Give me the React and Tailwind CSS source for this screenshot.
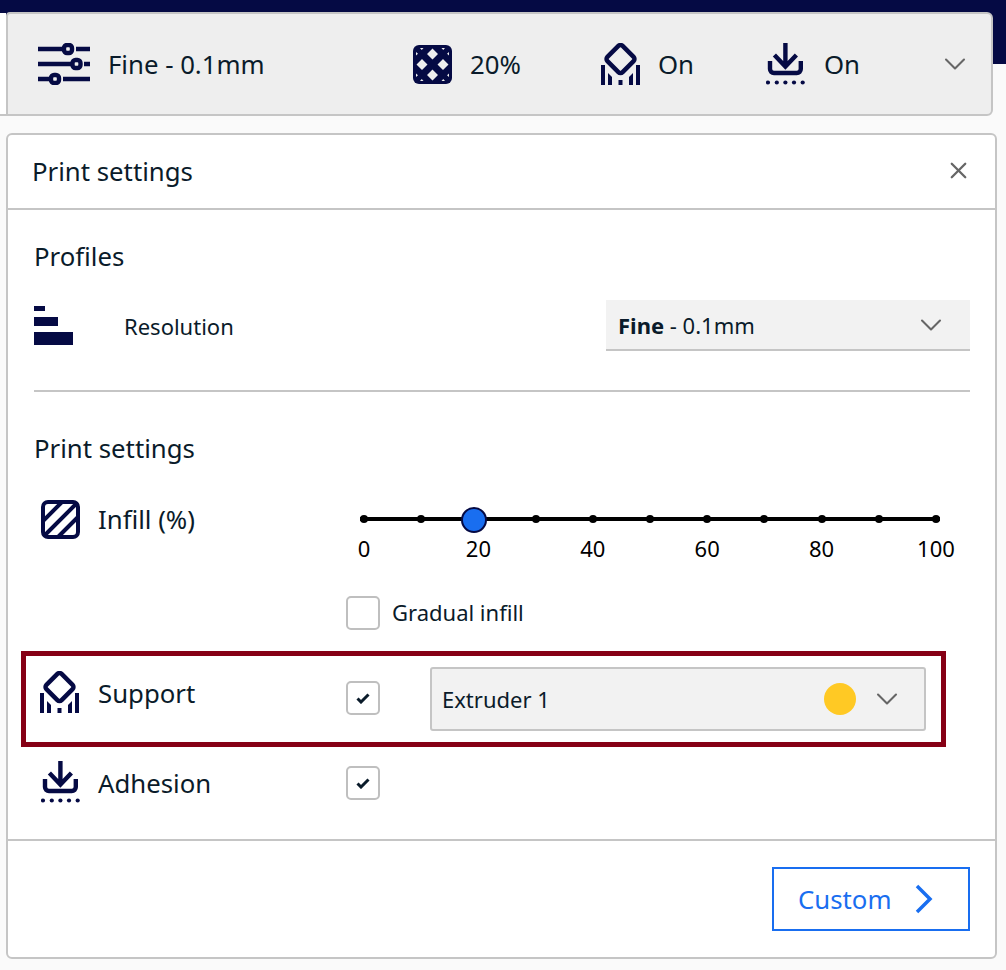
import React from 'react';
import { ChevronDown, X } from 'lucide-react';

const NAVY = '#050a44';

function ProfileIcon() {
  return (
    <svg width="52" height="42" viewBox="0 0 52 42" fill="none" stroke={NAVY} strokeWidth="4.400">
      <path d="M0 6h25M38 6h14M0 21h33M46 21h6M0 36h12M25 36h27" />
      <rect x="26" y="2" width="8" height="8" rx="3" />
      <rect x="34.500" y="17" width="8" height="8" rx="3" />
      <rect x="13" y="32" width="8" height="8" rx="3" />
    </svg>
  );
}

function InfillDenseIcon() {
  const corners = 'M7 3h3.500L8.750 5zM3 7v3.500L5 8.750zM32 3h-3.500L30.250 5zM36 7v3.500L34 8.750zM7 36h3.500L8.750 34zM3 32v-3.500L5 30.250zM32 36h-3.500L30.250 34zM36 32v-3.500L34 30.250z';
  return (
    <svg width="39" height="39" viewBox="0 0 39 39">
      <rect width="39" height="39" rx="6" fill={NAVY} />
      <path d="M19.500 3.500l5.500 5.500-5.500 5.500-5.500-5.500zM9 14l5.500 5.500L9 25l-5.500-5.500zM30 14l5.500 5.500L30 25l-5.500-5.500zM19.500 24.500l5.500 5.500-5.500 5.500-5.500-5.500z" fill="#eeeeee" />
      <path d={corners} fill="#eeeeee" />
    </svg>
  );
}

function InfillIcon() {
  return (
    <svg width="39" height="39" viewBox="0 0 39 39" fill="none" stroke={NAVY}>
      <path d="M1 22L22 1M4 35L35 4M17 37L37 17" strokeWidth="4" />
      <rect x="2" y="2" width="35" height="35" rx="5" strokeWidth="4" />
    </svg>
  );
}

function SupportIcon() {
  return (
    <svg width="40" height="42" viewBox="0 0 40 42" fill="none">
      <rect x="8.750" y="5.250" width="21.500" height="21.500" rx="3" transform="rotate(45 19.500 16)" stroke={NAVY} strokeWidth="4.500" />
      <path d="M0 22h4v20H0zM35 22h4v20h-4zM7 30l4 4v8H7zM32 30l-4 4v8h4zM17.500 37h4v5h-4z" fill={NAVY} />
    </svg>
  );
}

function AdhesionIcon() {
  return (
    <svg width="39" height="42" viewBox="0 0 39 42" fill="none">
      <path d="M19.400 0v22M8.400 12l11 11.500 11-11.500" stroke={NAVY} strokeWidth="4.400" />
      <path d="M4 18v8a4 4 0 0 0 4 4h22.800a4 4 0 0 0 4-4v-8" stroke={NAVY} strokeWidth="4.400" />
      {[2, 10.800, 19.400, 28, 36.700].map((x) => (
        <circle key={x} cx={x} cy="39.500" r="2.100" fill={NAVY} />
      ))}
    </svg>
  );
}

function ResolutionIcon() {
  return (
    <div className="flex flex-col items-start w-[40px]">
      <div className="w-[11px] h-[5px] bg-[#050a44]" />
      <div className="w-[24px] h-[9px] mt-[6px] bg-[#050a44]" />
      <div className="w-[39px] h-[13px] mt-[6px] bg-[#050a44]" />
    </div>
  );
}

function Check({ on }) {
  return (
    <div className="w-[34px] h-[34px] rounded-[5px] border-2 border-[#bfbfbf] bg-white flex items-center justify-center">
      {on && (
        <svg width="14" height="11" viewBox="0 0 14 11" fill="none">
          <path d="M1.500 5.500L5 9l7.500-7.500" stroke="#0a1b2a" strokeWidth="3" />
        </svg>
      )}
    </div>
  );
}

function Slider() {
  const ticks = [0, 10, 20, 30, 40, 50, 60, 70, 80, 90, 100];
  const labels = [0, 20, 40, 60, 80, 100];
  return (
    <div className="w-[612px]">
      <div className="relative mx-[16px] h-[38px] flex items-center">
        <div className="relative w-full h-[4px] bg-black flex items-center justify-between">
          {ticks.map((t) => (
            <div key={t} className="w-[8px] h-[8px] rounded-full bg-black" />
          ))}
        </div>
        <div className="absolute left-[101px] top-[7px] w-[26px] h-[26px] rounded-full bg-[#196ef0] border-2 border-[#050a44]" />
      </div>
      <div className="flex justify-between text-[22px] leading-[20px] text-black">
        {labels.map((l) => (
          <div key={l} className="w-[40px] text-center">{l}</div>
        ))}
      </div>
    </div>
  );
}

export default function App() {
  return (
    <div className="w-[1006px] h-[970px] bg-[#fafafa] overflow-hidden font-['Noto_Sans',sans-serif] text-[#0a1b2a]">
      <div className="h-[64px] bg-[#050a44]" />

      <div className="flex -mt-[52px]">
        <div className="w-[6px] h-[103px] mt-[1px] bg-white border-b-2 border-[#c5c5c5]" />
        <div className="w-[987px] h-[104px] flex items-center bg-[#eeeeee] border-2 border-[#c5c5c5] rounded-r-[6px] rounded-tl-[4px]">
          <div className="ml-[30px]"><ProfileIcon /></div>
          <span className="ml-[18px] w-[305px] text-[25.750px] leading-[32px]">Fine - 0.1mm</span>
          <InfillDenseIcon />
          <span className="ml-[18px] w-[131px] text-[25.750px] leading-[32px]">20%</span>
          <SupportIcon />
          <span className="ml-[17px] w-[108px] text-[25.750px] leading-[32px]">On</span>
          <AdhesionIcon />
          <span className="ml-[19px] w-[113px] text-[25.750px] leading-[32px]">On</span>
          <ChevronDown size={36} strokeWidth={1.400} className="text-[#666666]" />
        </div>
      </div>

      <div className="ml-[6px] mt-[17px] w-[991px] h-[826px] bg-white border-2 border-[#c5c5c5] rounded-[6px] flex flex-col">
        <div className="h-[75px] shrink-0 flex items-center justify-between pb-[2px] pl-[24px] pr-[23px] border-b-2 border-[#c5c5c5]">
          <span className="text-[25.750px] leading-[32px]">Print settings</span>
          <X size={27} strokeWidth={2} className="text-[#666666]" />
        </div>

        <div className="flex-1 pl-[26px] pr-[25px]">
          <div className="mt-[30px] h-[34px] pb-[2px] flex items-center text-[25.750px]">Profiles</div>

          <div className="mt-[26px] h-[51px] flex items-start">
            <div className="mt-[6px]"><ResolutionIcon /></div>
            <div className="ml-[50px] h-[52px] flex items-center text-[22px]">Resolution</div>
            <div className="ml-auto w-[364px] h-[51px] pl-[12px] pr-[21px] flex items-center justify-between bg-[#f2f2f2] border-b-2 border-[#c5c5c5] text-[22px]">
              <span className="pt-[2px]"><span className="font-bold">Fine</span> - 0.1mm</span>
              <ChevronDown size={36} strokeWidth={1.400} className="text-[#666666]" />
            </div>
          </div>

          <div className="mt-[39px] h-[2px] bg-[#c5c5c5]" />

          <div className="mt-[40px] h-[34px] pb-[2px] flex items-center text-[25.750px]">Print settings</div>

          <div className="mt-[34px] h-[70px] flex items-start">
            <div className="ml-[7px]"><InfillIcon /></div>
            <div className="ml-[18px] w-[246px] h-[38px] flex items-center text-[25.750px]">Infill (%)</div>
            <Slider />
          </div>

          <div className="mt-[26px] h-[34px] ml-[312px] flex items-center">
            <Check />
            <span className="ml-[12px] pb-[2px] text-[22px]">Gradual infill</span>
          </div>

          <div className="mt-[21px] -ml-[13px] w-[925px] h-[96px] border-[5px] border-[#860015] flex items-start">
            <div className="mt-[15px] ml-[14px]"><SupportIcon /></div>
            <div className="mt-[20px] ml-[18px] w-[248px] h-[34px] flex items-center text-[25.750px]">Support</div>
            <div className="mt-[25px]"><Check on /></div>
            <div className="mt-[11px] ml-[50px] w-[496px] h-[64px] pl-[10px] pr-[19px] flex items-center bg-[#f2f2f2] border-2 border-[#c5c5c5] rounded-[3px] text-[22px]">
              <span>Extruder 1</span>
              <div className="ml-auto w-[32px] h-[32px] rounded-full bg-[#ffc924]" />
              <ChevronDown size={36} strokeWidth={1.400} className="ml-[13px] text-[#666666]" />
            </div>
          </div>

          <div className="mt-[14px] h-[42px] flex items-start">
            <div className="ml-[7px]"><AdhesionIcon /></div>
            <div className="ml-[18px] w-[248px] h-[44px] flex items-center text-[25.750px]">Adhesion</div>
            <div className="mt-[5px]"><Check on /></div>
          </div>
        </div>

        <div className="h-[118px] shrink-0 flex justify-end pt-[26px] pr-[25px] border-t-2 border-[#c5c5c5]">
          <button className="w-[198px] h-[64px] pl-[24px] pr-[35px] flex items-center justify-between border-2 border-[#196ef0] text-[25.750px] text-[#196ef0]">
            Custom
            <svg width="18" height="30" viewBox="0 0 18 30" fill="none" stroke="#196ef0" strokeWidth="3.500">
              <path d="M2 2l13 13L2 28" />
            </svg>
          </button>
        </div>
      </div>
    </div>
  );
}
